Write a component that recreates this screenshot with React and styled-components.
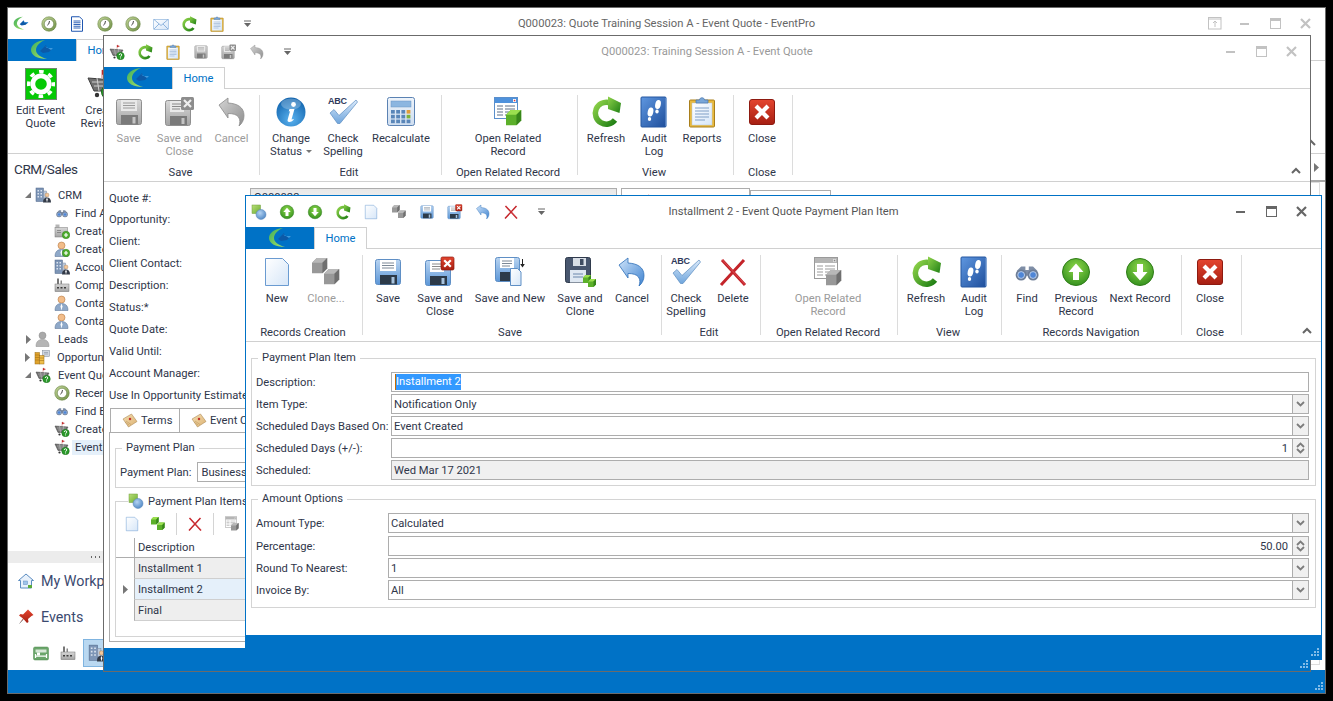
import React from 'react';
import styled, { createGlobalStyle } from 'styled-components';

const FONT = `Roboto, "Liberation Sans", sans-serif`;
const BLUE = '#0072c6';
const INK = '#2f364a';

const Global = createGlobalStyle`
  html, body { margin: 0; padding: 0; background: #000; }
  * { box-sizing: border-box; }
  body { font-family: ${FONT}; font-size: 11.2px; color: ${INK}; }
  fieldset { margin: 0; min-width: 0; }
`;

const Desktop = styled.div`position: relative; width: 1333px; height: 701px; background: #000; overflow: hidden;`;
const Win = styled.section`
  position: absolute; left: ${p => p.$x}px; top: ${p => p.$y}px; width: ${p => p.$w}px; height: ${p => p.$h}px;
  background: #fff; border: 1px solid ${p => p.$edge}; display: flex; flex-direction: column; overflow: hidden;
`;
const TitleBar = styled.header`display: grid; grid-template-columns: 1fr auto 1fr; align-items: center; height: 31px; flex: none;`;
const Qat = styled.div`display: flex; align-items: center; gap: 12px; padding-left: 5px;`;
const QatMore = styled.div`width: 16px; margin-left: 2px; display: flex; justify-content: center;`;
const Title = styled.div`color: ${p => p.$c}; white-space: nowrap;`;
const WinBtns = styled.div`display: flex; justify-content: flex-end; padding-right: ${p => p.$pr}px;`;
const WinBtn = styled.div`width: 30px; height: 20px; display: flex; align-items: center; justify-content: center;`;

const TabRow = styled.div`display: flex; height: 22px; flex: none; border-bottom: 1px solid #d0d0d0;`;
const LogoBlock = styled.div`width: 68px; height: 22px; background: ${BLUE}; display: flex; align-items: center; justify-content: center;`;
const HomeTab = styled.div`
  width: 53px; height: 22px; color: ${BLUE}; background: #fff; border: 1px solid #d0d0d0; border-bottom: 0;
  display: flex; align-items: center; justify-content: center;
`;

const Ribbon = styled.div`display: flex; height: 93px; flex: none; padding-top: 6px; border-bottom: 1px solid #d0d0d0; padding-right: 9px;`;
const RGroup = styled.div`
  width: ${p => p.$w}px; height: 80px; border-right: 1px solid #dcdcdc; display: flex; flex-direction: column; flex: none;
  padding-right: ${p => p.$pr || 0}px;
`;
const RButtons = styled.div`flex: 1; display: flex; justify-content: center; padding-top: 1px;`;
const RBtn = styled.div`
  width: ${p => p.$w}px; flex: none; display: flex; flex-direction: column; align-items: center;
  color: ${p => p.$off ? '#9b9b9b' : INK};
`;
const RIcon = styled.div`width: 32px; height: 32px; margin-bottom: 4px; display: flex; align-items: center; justify-content: center;`;
const RText = styled.div`text-align: center; line-height: 13px; white-space: nowrap;`;
const RLabel = styled.div`text-align: center; line-height: 14px; margin-bottom: -5px; white-space: nowrap;`;
const Caret = styled.span`display: inline-block; margin-left: 4px; border: 3px solid transparent; border-top: 3px solid #777; border-bottom: 0; vertical-align: 2px;`;
const Collapse = styled.div`margin-left: auto; align-self: flex-end; display: flex; margin-bottom: 7px;`;

const StatusBar = styled.footer`height: ${p => p.$h}px; flex: none; background: ${BLUE}; display: flex; justify-content: flex-end; align-items: flex-end; padding: 0 ${p => p.$gr}px 3px 0;`;

/* Form */
const FrontBody = styled.div`flex: 1; padding: 9px 5px 0; display: flex; flex-direction: column; gap: 6px;`;
const Box = styled.fieldset`border: 1px solid #d4d4d4; padding: 0 6px ${p => p.$pb}px 4px;`;
const Legend = styled.legend`margin-left: 2px; padding: 0 4px; line-height: 14px;`;
const Rows = styled.div`display: flex; flex-direction: column; gap: 2px; padding-top: 7px;`;
const Row = styled.div`display: grid; grid-template-columns: ${p => p.$lab}px 1fr; align-items: center; margin-top: ${p => p.$mt || 0}px;`;
const Lab = styled.label`white-space: nowrap;`;
const Field = styled.div`
  height: 20px; border: 1px solid #adadad; background: ${p => p.$ro ? '#f0f0f0' : '#fff'}; display: flex; align-items: center;
  padding-left: ${p => p.$pl ?? 2}px; color: ${INK}; overflow: hidden; white-space: nowrap;
`;
const FieldText = styled.span`flex: 1; text-align: ${p => p.$right ? 'right' : 'left'}; padding-right: ${p => p.$right ? 4 : 0}px;`;
const Sel = styled.span`background: #3399ff; color: #fff; border-left: 1px solid #c96a00; display: inline-block; line-height: 16px;`;
const Drop = styled.div`width: 16px; height: 100%; flex: none; background: #f0f0f0; border-left: 1px solid #adadad; display: flex; flex-direction: column; align-items: center; justify-content: center;`;

/* Mid form */
const MidBody = styled.div`flex: 1; padding: 4px 4px 6px 5px; display: flex; flex-direction: column; min-height: 0;`;
const MidRow = styled.div`display: grid; grid-template-columns: 141px 367px 4px 129px 81px; height: 22px; align-items: center;`;
const MidField = styled.div`height: 20px; border: 1px solid #adadad; background: linear-gradient(#e8e8e8,#f4f4f4); padding-left: 3px; line-height: 18px;`;
const MidBtn = styled.div`height: 20px; margin-top: ${p => p.$mt || 0}px; border: 1px solid #adadad; background: #fff; display: flex; align-items: center; padding: 5px 0 0 ${p => p.$pl}px;`;
const Swatch = styled.i`display: block; width: 10px; height: 10px; background: #bdbdbd; border: 1px solid #999;`;
const Tabs = styled.div`display: flex; margin-top: 2px; height: 24px; flex: none; padding-left: 1px;`;
const Tab = styled.div`
  width: ${p => p.$w}px; border: 1px solid #adadad; border-bottom: 0; border-left-width: ${p => p.$first ? 1 : 0}px;
  display: flex; align-items: center; gap: 3px; padding-left: 11px; white-space: nowrap;
  & > svg { flex: none; }
`;
const TabPanel = styled.div`flex: 1; border: 1px solid #adadad; padding: 8px 5px 5px; display: flex; flex-direction: column; gap: 5px; min-height: 0;`;
const InlineRow = styled.div`display: flex; align-items: center; gap: 4px; padding: 7px 0 5px 0;`;
const Box2 = styled.fieldset`border: 1px solid #d4d4d4; padding: 0 0 ${p => p.$pb}px 4px;`;
const PlanField = styled(Field)`width: 90px; height: 20px; margin-left: 2px;`;
const Legend2 = styled.legend`margin-left: 8px; padding: 0 4px 0 0; display: flex; align-items: center; gap: 4px; height: 16px;`;
const MiniBar = styled.div`display: flex; align-items: center; height: 24px; margin: 3px 0 2px 4px; gap: 10px;`;
const MiniSep = styled.div`width: 1px; height: 22px; background: #d4d4d4;`;
const GridT = styled.div`display: flex; flex-direction: column; margin-left: -4px;`;
const GridRow = styled.div`display: flex; height: ${p => p.$h}px;`;
const GridInd = styled.div`width: 18px; flex: none; display: flex; align-items: center; justify-content: center; border-bottom: ${p => p.$head ? '1px solid #adadad' : '0'};`;
const GridCell = styled.div`
  flex: 1; border-left: 1px solid #adadad; padding-left: 3px; display: flex; align-items: center;
  background: ${p => p.$bg}; border-bottom: 1px solid ${p => p.$head ? '#adadad' : '#cfcfcf'};
`;

/* Outer */
const OuterBody = styled.div`flex: 1; display: flex; min-height: 0;`;
const Sidebar = styled.aside`width: 95px; flex: none; display: flex; flex-direction: column; overflow: hidden;`;
const SideHead = styled.div`height: 32px; flex: none; padding: 5px 0 0 6px; font-size: 13.5px; letter-spacing: -.4px; line-height: 20px; white-space: nowrap;`;
const Tree = styled.div`flex: 1;`;
const TreeRow = styled.div`display: flex; align-items: center; height: 18px; padding-left: ${p => p.$lvl ? 46 : 17}px; white-space: nowrap;`;
const TreeArrow = styled.div`width: 6px; margin-right: 4px; display: flex; justify-content: center;`;
const TreeIcon = styled.div`width: 16px; height: 16px; flex: none; margin-right: ${p => p.$lvl ? 2 : 7}px;`;
const TreeLabel = styled.span`padding: 1px 4px 1px ${p => p.$lvl ? 3 : 0}px; background: ${p => p.$sel ? '#e5f0fa' : 'transparent'};`;
const Splitter = styled.div`height: 12px; flex: none; background: #ececec; display: flex; justify-content: flex-start; padding-left: 83px; align-items: center; gap: 2px;`;
const Dot = styled.i`width: 1px; height: 2px; margin-right: 1px; background: #666;`;
const NavItem = styled.div`height: 36px; flex: none; display: flex; align-items: center; padding-left: 10px; gap: 7px; font-size: 14.3px; color: #3b4a70; white-space: nowrap;`;
const NavStrip = styled.div`height: 35px; flex: none; display: flex; align-items: center; padding: 0 0 0 25px; gap: 11px;`;
const StripSel = styled.div`width: 40px; height: 28px; flex: none; margin-left: -4px; background: #b9d8f1; border: 1px solid #7fb4e0; padding: 4px 0 0 4px;`;
const Main = styled.main`flex: 1; display: flex; flex-direction: column; padding-bottom: 5px;`;
const MainHead = styled.div`height: 28px; flex: none; border-bottom: 2px solid #a8a8a8; display: flex; align-items: center; justify-content: flex-end; padding-right: 6px;`;
const MainFrame = styled.div`flex: 1; margin-right: 5px; border: 1px solid #dddddd;`;

const Defs = styled.svg`position: absolute; width: 0; height: 0;`;

/* ---------- icons ---------- */
const Ic = ({ s = 32, vb = 32, children }) => <svg width={s} height={s} viewBox={`0 0 ${vb} ${vb}`} style={{ display: 'block', flex: 'none' }}>{children}</svg>;

const Floppy = ({ s, gray }) => <Ic s={s}>
  <rect x="3.5" y="3.5" width="25" height="25" rx="2" fill={gray ? 'url(#gGray)' : 'url(#gSky)'} stroke={gray ? '#8f8f8f' : '#5f8fc5'} />
  <rect x="8" y="4" width="16" height="11" fill={gray ? '#e9e9e9' : '#fff'} />
  <path d="M10 7h12M10 9.5h12M10 12h12" stroke={gray ? '#9a9a9a' : '#7c8896'} strokeWidth="1" />
  <rect x="8" y="19" width="17" height="9.5" fill={gray ? '#7a7a7a' : '#2c3a49'} />
  <rect x="19.5" y="21" width="3" height="6.5" fill={gray ? '#c4c4c4' : '#a8c3de'} />
</Ic>;
const Badge = ({ x = 17, y = 1, w = 13 }) => <g transform={`translate(${x} ${y})`}>
  <rect width={w} height={w} rx="1.5" fill="url(#gRed)" stroke="#8e1a10" strokeWidth=".7" />
  <path d={`M3.2 3.2L${w - 3.2} ${w - 3.2}M${w - 3.2} 3.2L3.2 ${w - 3.2}`} stroke="#fff" strokeWidth="2.2" />
</g>;
const SaveCloseI = ({ s, gray }) => <Ic s={s}>
  <rect x="1.5" y="4.5" width="25" height="25" rx="2" fill={gray ? 'url(#gGray)' : 'url(#gSky)'} stroke={gray ? '#8f8f8f' : '#5f8fc5'} />
  <rect x="6" y="5" width="14" height="11" fill={gray ? '#e9e9e9' : '#fff'} />
  <path d="M8 8h10M8 10.5h10M8 13h8" stroke="#8a8a8a" />
  <rect x="6" y="20" width="17" height="9" fill={gray ? '#7a7a7a' : '#2c3a49'} />
  <rect x="17.5" y="22" width="3" height="6" fill={gray ? '#c4c4c4' : '#a8c3de'} />
  {gray ? <g><rect x="17" y="1" width="13" height="13" rx="1.5" fill="#8d8d8d" /><path d="M20 4l7 7M27 4l-7 7" stroke="#eee" strokeWidth="2.2" /></g> : <Badge />}
</Ic>;
const SaveNewI = ({ s }) => <Ic s={s}>
  <rect x="1.5" y="1.5" width="24" height="24" rx="2" fill="url(#gSky)" stroke="#5f8fc5" />
  <rect x="6" y="2" width="14" height="10" fill="#fff" />
  <path d="M8 5h10M8 7.5h10M8 10h8" stroke="#7c8896" />
  <rect x="6" y="16" width="13" height="9" fill="#2c3a49" />
  <path d="M16.5 12.5h7l3.5 3.5v13.5h-10.500z" fill="url(#gPage)" stroke="#5f8fc5" />
  <path d="M28.500 3v6" stroke="#222" /><path d="M26.200 8h4.600l-2.300 3.500z" fill="#222" />
</Ic>;
const SaveCloneI = ({ s }) => <Ic s={s}>
  <rect x="1.500" y="1.500" width="25" height="25" rx="2" fill="#48566e" stroke="#2f3a4c" />
  <rect x="9" y="2" width="13" height="8" fill="#d8dee6" /><rect x="16" y="3" width="3.500" height="6" fill="#3f4c61" />
  <rect x="6" y="14" width="16" height="12.500" fill="#dfe8f2" /><path d="M9 18h10M9 21h10" stroke="#6a87ab" />
  <Cube x={19} y={19} c="g" /><Cube x={24} y={23} c="g" />
</Ic>;
const Cube = ({ x, y, c }) => {
  const a = c === 'g' ? ['#9be04f', '#5cb02a', '#37861a'] : ['#b8b8b8', '#989898', '#6f6f6f'];
  return <g transform={`translate(${x} ${y})`}>
    <path d="M0 2.500L2.500 0h5.500v5.500L5.500 8H0z" fill={a[1]} /><path d="M0 2.500L2.500 0h5.500L5.500 2.500z" fill={a[0]} /><path d="M5.500 2.500L8 0v5.500L5.500 8z" fill={a[2]} />
  </g>;
};
const CubesI = ({ s, green }) => <Ic s={s}>
  <g transform="translate(2 2) scale(1.900)"><Cube x={0} y={0} c={green ? 'g' : 'x'} /></g>
  <g transform="translate(14 13) scale(1.900)"><Cube x={0} y={0} c={green ? 'g' : 'x'} /></g>
</Ic>;
const UndoI = ({ s, gray }) => <Ic s={s}>
  <path d="M3 9L12 2v5c9 .5 16 4 16 12.500 0 4.500-2 8-5 10.500 1-3 1.500-6-.5-9-2-2.500-5.500-3.500-10.500-3.500V22z" fill={gray ? 'url(#gGrayA)' : 'url(#gBlueA)'} stroke={gray ? '#8a8a8a' : '#2d6fb7'} strokeWidth=".8" />
</Ic>;
const InfoI = ({ s }) => <Ic s={s}>
  <circle cx="16" cy="16" r="14.500" fill="url(#gInfo)" />
  <ellipse cx="16" cy="8" rx="10" ry="5.500" fill="#fff" opacity=".25" />
  <circle cx="18.500" cy="8.500" r="2.400" fill="#fff" />
  <path d="M14.500 13h5l-3 10.500 2.500-.5c-1 2-2.800 3-4.700 3-1.600 0-2-1-1.600-2.400l2.300-8.400-1.300.3z" fill="#fff" />
</Ic>;
const AbcText = styled.text`font: bold 9px "Liberation Sans", sans-serif; fill: #2f3a5c; letter-spacing: -.2px;`;
const AbcI = ({ s }) => <Ic s={s}>
  <AbcText x="1" y="8">ABC</AbcText>
  <path d="M3 17l4-3.500 5 6L29 4l1.500 2L13 27.500h-2.500z" fill="url(#gCheck)" stroke="#5b8cc0" strokeWidth=".7" />
</Ic>;
const CalcI = ({ s }) => <Ic s={s}>
  <rect x="2.500" y="1.500" width="27" height="28" rx="2" fill="url(#gCalc)" stroke="#5b82b3" />
  <rect x="6" y="5" width="20" height="6" fill="#8cb6e0" stroke="#6a94c2" strokeWidth=".5" />
  {[0, 1, 2].map(r => [0, 1, 2, 3].map(c => <rect key={r + '' + c} x={6 + c * 5.200} y={14 + r * 4.800} width="3.800" height="3.600" fill={c === 3 ? ['#e09c3a', '#7fb13a', '#5a86b8'][r] : '#5a86b8'} />))}
</Ic>;
const RelatedI = ({ s, gray }) => <Ic s={s}>
  <rect x="2.500" y="1.500" width="23" height="21" fill="#fff" stroke={gray ? '#9a9a9a' : '#5a8fcc'} />
  <rect x="3" y="2" width="22" height="5" fill={gray ? '#b5b5b5' : '#4f92dc'} /><rect x="21" y="3" width="3" height="3" fill={gray ? '#e0e0e0' : '#fff'} /><rect x="21.800" y="3.800" width="1.500" height="1.500" fill={gray ? '#888' : '#d33'} />
  <path d="M5 10h6M13 10h10M5 13h6M13 13h10M5 16h6M13 16h10M5 19h6M13 19h4" stroke={gray ? '#9a9a9a' : '#5c6f86'} />
  <g transform="translate(14 14) scale(1.900)"><Cube x={0} y={0} c={gray ? 'x' : 'g'} /></g>
</Ic>;
const RefreshI = ({ s }) => <Ic s={s}>
  <path d="M25 24A11 11 0 1 1 19 6.500" fill="none" stroke="url(#gGreenS)" strokeWidth="5.500" />
  <path d="M18 .5L31 7 29.500 17 18 13z" fill="url(#gGreenS)" />
</Ic>;
const AuditI = ({ s }) => <Ic s={s}>
  <rect x="3" y="1" width="25" height="30" rx="1" fill="url(#gBook)" stroke="#2457a0" /><path d="M28 2v28" stroke="#7ea6dc" />
  <ellipse cx="12.500" cy="16" rx="2.800" ry="4.500" fill="#fff" transform="rotate(12 12.500 16)" /><ellipse cx="11.500" cy="23" rx="1.700" ry="2" fill="#fff" />
  <ellipse cx="20" cy="8.500" rx="2.800" ry="4.500" fill="#fff" transform="rotate(12 20 8.500)" /><ellipse cx="19" cy="15.500" rx="1.700" ry="2" fill="#fff" />
</Ic>;
const ClipI = ({ s }) => <Ic s={s}>
  <rect x="3.500" y="4" width="25" height="27" rx="1" fill="#e8b93d" stroke="#a97f1c" />
  <rect x="6" y="7" width="20" height="22" fill="url(#gPage)" stroke="#b7c7d8" strokeWidth=".5" />
  <path d="M9 12h14M9 15h14M9 18h14M9 21h14M9 24h10" stroke="#7e9fc6" />
  <path d="M10 7V4h3.500c0-3 5-3 5 0H22v3z" fill="#79a6d8" stroke="#4f7cb3" strokeWidth=".8" />
</Ic>;
const CloseI = ({ s }) => <Ic s={s}>
  <rect x="3.500" y="3.500" width="25" height="25" rx="2.500" fill="url(#gRed)" stroke="#8e1a10" />
  <path d="M10 10l12 12M22 10L10 22" stroke="#fff" strokeWidth="4.200" />
</Ic>;
const PageI = ({ s }) => <Ic s={s}>
  <path d="M4.500 2.500h17l6 6v21h-23z" fill="url(#gPage)" stroke="#6a9bd1" />
</Ic>;
const DelI = ({ s }) => <Ic s={s}>
  <path d="M5 4l23 25M27 4L4 29" stroke="#c4242a" strokeWidth="3" />
  <path d="M5 3.500l23 25" stroke="#e6646a" strokeWidth=".6" />
</Ic>;
const BinoI = ({ s }) => <Ic s={s}>
  <g transform="translate(2.500 2) scale(.85)">
    <path d="M4 15l5-5h5v4h4v-4h5l5 5v6H4z" fill="#7f8ea6" />
    <circle cx="9" cy="20" r="6.500" fill="#6d7d96" /><circle cx="23" cy="20" r="6.500" fill="#6d7d96" />
    <circle cx="9" cy="20" r="4" fill="#4f86d6" stroke="#c9d8ee" /><circle cx="23" cy="20" r="4" fill="#4f86d6" stroke="#c9d8ee" />
  </g>
</Ic>;
const ArrowBall = ({ s, down }) => <Ic s={s}>
  <circle cx="16" cy="16" r="13.500" fill="url(#gBall)" stroke="#2f7d18" />
  <path d={down ? 'M13 8h6v8h4.500L16 24.500 8.500 16H13z' : 'M13 24h6v-8h4.500L16 7.500 8.500 16H13z'} fill="#fff" />
</Ic>;
const GearI = ({ s }) => <Ic s={s}>
  <rect x=".5" y=".5" width="31" height="31" fill="#05c905" stroke="#6e8a6e" />
  <circle cx="16" cy="16" r="12.300" fill="none" stroke="#fff" strokeWidth="3.500" strokeDasharray="4.600 5.060" strokeDashoffset="2.300" />
  <circle cx="16" cy="16" r="8.200" fill="#05c905" stroke="#fff" strokeWidth="4.800" />
</Ic>;
const CartI = ({ s }) => <Ic s={s}>
  <path d="M2 10l6 13h14l6-11z" fill="#6f6f6f" stroke="#3e3e3e" />
  <path d="M6 14h18M8 18h14M11 10l2 13M19 10l-1 13" stroke="#cfcfcf" />
  <circle cx="11" cy="27" r="2.200" fill="#333" />
  <path d="M16 10V2l5 2.500-5 2" fill="#c33" stroke="#a11" strokeWidth=".6" />
  <circle cx="23" cy="24" r="7.500" fill="#2c9a2c" stroke="#1b6b1b" />
  <path d="M20.500 22c0-3.500 5-3.500 5 0 0 2-2.500 2-2.500 3.500" fill="none" stroke="#fff" strokeWidth="1.800" /><rect x="22" y="27" width="2" height="1.800" fill="#fff" />
</Ic>;
const ClockI = ({ s }) => <Ic s={s}>
  <circle cx="16" cy="16" r="14.500" fill="url(#gOlive)" stroke="#5d7a37" />
  <circle cx="16" cy="16" r="9.500" fill="#fff" stroke="#4d6a2a" />
  <path d="M17 10l-1.500 6-3 2.500" fill="none" stroke="#333" strokeWidth="1.800" />
</Ic>;
const DocI = ({ s }) => <Ic s={s}>
  <path d="M5 1.500h16l6 6V30.500H5z" fill="#fff" stroke="#1f56b0" strokeWidth="2" />
  <path d="M9 10h14M9 13.500h14M9 17h14M9 20.500h14M9 24h14" stroke="#1f56b0" strokeWidth="1.800" />
</Ic>;
const MailI = ({ s }) => <Ic s={s}>
  <rect x="1.500" y="6.500" width="29" height="20" fill="url(#gPage)" stroke="#6a9bd1" />
  <path d="M2 7l14 12L30 7M2 26l10-10M30 26L20 16" fill="none" stroke="#6a9bd1" strokeWidth="1.400" />
</Ic>;
const LogoI = ({ w = 24, h = 22 }) => <svg width={w} height={h} viewBox="0 0 24 22" style={{ display: 'block', flex: 'none' }}>
  <path d="M15 1C6 2 1 6 1 11c0 5 6 9 16 9-7-2-11-5-11-9 0-4 4-8 9-10z" fill="url(#gLogo)" />
  <path d="M10 12l6-6 1 3 6 0-4 4-6 1z" fill="#0c5aa8" /><path d="M15 7l2 2h6l-2 2z" fill="#3c9be0" />
</svg>;
const ShapesI = ({ s }) => <Ic s={s}>
  <rect x="2" y="2" width="17" height="17" fill="url(#gGreenB)" stroke="#6f9d3a" />
  <circle cx="20" cy="21" r="10" fill="url(#gGlobe)" stroke="#5a86b8" />
</Ic>;
const BuildPersonI = ({ s }) => <Ic s={s}>
  <rect x="2" y="2" width="15" height="27" fill="#7d95b6" stroke="#4e6588" />
  <rect x="17" y="8" width="6" height="14" fill="#b9c7da" stroke="#7d8da5" />
  <path d="M5 6h3v3H5zM11 6h3v3h-3zM5 12h3v3H5zM11 12h3v3h-3zM5 18h3v3H5zM11 18h3v3h-3z" fill="#dbe4ef" />
  <circle cx="24" cy="16" r="4" fill="#f3c79a" stroke="#8a6033" strokeWidth=".6" /><path d="M16 31c0-7 3-10 8-10s8 3 8 10z" fill="#323a47" /><path d="M24 21l-1.500 4 1.500 6 1.500-6z" fill="#fff" />
</Ic>;
const PersonI = ({ s, add, grayp }) => <Ic s={s}>
  <circle cx="15" cy="9" r="7" fill={grayp ? '#a9a9a9' : '#f2bd8a'} stroke={grayp ? '#8a8a8a' : '#a8682e'} />
  <path d="M2 31c0-10 5-14 13-14s13 4 13 14z" fill={grayp ? '#b5b5b5' : '#8fa9c9'} stroke={grayp ? '#8a8a8a' : '#516b8e'} />
  {!grayp && <path d="M15 17l-2 6 2 8 2-8z" fill="#fff" />}
  {add && <g><circle cx="24" cy="24" r="7.500" fill="#4fae2e" stroke="#2f7d18" /><path d="M24 20v8M20 24h8" stroke="#fff" strokeWidth="2.400" /></g>}
</Ic>;
const FactoryI = ({ s }) => <Ic s={s}>
  <rect x="2" y="14" width="28" height="15" fill="url(#gGray)" stroke="#6f6f6f" />
  <rect x="6" y="3" width="4" height="11" fill="#777" /><rect x="13" y="7" width="3" height="7" fill="#888" />
  <rect x="6" y="20" width="4" height="3" fill="#3d3d3d" /><rect x="13" y="20" width="4" height="3" fill="#3d3d3d" /><rect x="20" y="20" width="4" height="3" fill="#3d3d3d" />
</Ic>;
const FolderAddI = ({ s }) => <Ic s={s}>
  <rect x="3" y="3" width="8" height="8" fill="#b5b5b5" /><rect x="2" y="9" width="25" height="19" fill="url(#gGray)" stroke="#7a7a7a" />
  <path d="M6 15h8M6 19h8" stroke="#555" />
  <circle cx="24" cy="24" r="7.500" fill="#4fae2e" stroke="#2f7d18" /><path d="M24 20v8M20 24h8" stroke="#fff" strokeWidth="2.400" />
</Ic>;
const CoinsI = ({ s }) => <Ic s={s}>
  <rect x="17" y="3" width="14" height="12" fill="#cfd6e0" stroke="#7b8696" /><path d="M20 7h8M20 10h8" stroke="#7b8696" />
  <rect x="2" y="7" width="9" height="23" fill="#e0a32c" stroke="#9a6b10" /><rect x="11" y="13" width="9" height="17" fill="#efbe4a" stroke="#9a6b10" />
  <path d="M2 12h9M2 17h9M2 22h9M11 18h9M11 23h9" stroke="#9a6b10" />
</Ic>;
const NoteI = ({ s }) => <Ic s={s}>
  <path d="M2 12L19 2l11 15-17 11z" fill="url(#gTan)" stroke="#a17b43" /><circle cx="16" cy="12" r="2.500" fill="#c4352e" />
  <path d="M8 16l10 7M6 18l8 6" stroke="#b48f55" />
</Ic>;
const BedI = ({ s }) => <Ic s={s}>
  <rect x="1" y="4" width="30" height="26" rx="3" fill="#6aa56a" stroke="#4c8a4c" />
  <rect x="5" y="9" width="22" height="6" fill="#d8e8d8" /><path d="M5 22h22M5 18v8M27 18v8" stroke="#fff" strokeWidth="2.500" /><rect x="8" y="15" width="6" height="6" fill="#fff" />
</Ic>;
const HouseI = ({ s }) => <Ic s={s}>
  <path d="M16 2L1 15h4v15h22V15h4z" fill="#e8f1fb" stroke="#5b8cc0" strokeWidth="2" />
  <rect x="11" y="16" width="8" height="7" fill="#9fc3ea" stroke="#5b8cc0" /><rect x="20" y="24" width="8" height="6" fill="#5aaa3a" />
</Ic>;
const PinI = ({ s }) => <Ic s={s}>
  <path d="M20 1l11 11-4 2-7 6 1 6-3 2-7-8-8 8 7-9-8-6 3-3 5 1 7-7z" fill="url(#gRed)" />
  <path d="M11 21l-8 8" stroke="#888" strokeWidth="1.600" />
</Ic>;

const Chev = ({ up }) => <svg width="9" height="6" viewBox="0 0 9 6"><path d={up ? 'M1 5l3.500-3.500L8 5' : 'M1 1l3.500 3.500L8 1'} fill="none" stroke="#7c7c7c" strokeWidth="1.800" /></svg>;
const Grip = () => <svg width="8" height="8" viewBox="0 0 8 8" style={{ display: 'block' }}>
  {[[6, 0], [3, 3], [6, 3], [0, 6], [3, 6], [6, 6]].map(([x, y]) => <rect key={x + '-' + y} x={x} y={y} width="2" height="2" fill="#82bce8" />)}
</svg>;
const QatArrow = () => <svg width="7" height="7" viewBox="0 0 7 7"><path d="M0 1h7" stroke="#666" /><path d="M0 3h7L3.500 7z" fill="#666" /></svg>;
const RightTri = ({ c = '#777' }) => <svg width="5" height="9" viewBox="0 0 5 9"><path d="M0 0l5 4.500L0 9z" fill={c} /></svg>;
const DownTri = () => <svg width="6" height="6" viewBox="0 0 6 6"><path d="M6 0v6H0z" fill="#777" /></svg>;
const UpChev = () => <svg width="10" height="7" viewBox="0 0 10 7"><path d="M1 6l4-4 4 4" fill="none" stroke="#666" strokeWidth="2" /></svg>;
const Min = ({ c }) => <svg width="10" height="4" viewBox="0 0 10 4"><rect y="1" width="9" height="2" fill={c} /></svg>;
const Max = ({ c }) => <svg width="11" height="11" viewBox="0 0 11 11"><rect x=".5" y=".5" width="10" height="10" fill="none" stroke={c} /><rect width="11" height="3" fill={c} /></svg>;
const Cross = ({ c }) => <svg width="11" height="11" viewBox="0 0 11 11"><path d="M1 1l9 9M10 1l-9 9" stroke={c} strokeWidth="2.200" /></svg>;
const Restore = ({ c }) => <svg width="14" height="13" viewBox="0 0 14 13"><rect x=".5" y=".5" width="12.500" height="11.500" fill="none" stroke={c} /><path d="M1 2h12" stroke={c} /><path d="M7 10V4M5 6l2-2 2 2" stroke={c} fill="none" /></svg>;

const WindowButtons = ({ c, pr, restore }) => <WinBtns $pr={pr}>
  {restore && <WinBtn><Restore c={c} /></WinBtn>}
  <WinBtn><Min c={c} /></WinBtn><WinBtn><Max c={c} /></WinBtn><WinBtn><Cross c={c} /></WinBtn>
</WinBtns>;

const Tabbar = () => <TabRow><LogoBlock><LogoI /></LogoBlock><HomeTab>Home</HomeTab></TabRow>;

const RibbonView = ({ groups, collapse }) => <Ribbon>
  {groups.map(g => <RGroup key={g.label + g.w} $w={g.w} $pr={g.pr}>
    <RButtons>
      {g.items.map(b => <RBtn key={b.t.join()} $w={b.w} $off={b.off}>
        <RIcon>{b.i}</RIcon>
        <RText>{b.t.map((l, n) => <div key={l}>{l}{b.caret && n === b.t.length - 1 && <Caret />}</div>)}</RText>
      </RBtn>)}
    </RButtons>
    <RLabel>{g.label}</RLabel>
  </RGroup>)}
  {collapse && <Collapse><UpChev /></Collapse>}
</Ribbon>;

const frontGroups = [
  { label: 'Records Creation', w: 117, pr: 2, items: [
    { w: 46, t: ['New'], i: <PageI s={32} /> },
    { w: 52, t: ['Clone...'], off: 1, i: <CubesI s={32} /> }] },
  { label: 'Save', w: 299, pr: 4, items: [
    { w: 44, t: ['Save'], i: <Floppy s={32} /> },
    { w: 60, t: ['Save and', 'Close'], i: <SaveCloseI s={32} /> },
    { w: 80, t: ['Save and New'], i: <SaveNewI s={32} /> },
    { w: 60, t: ['Save and', 'Clone'], i: <SaveCloneI s={32} /> },
    { w: 44, t: ['Cancel'], i: <UndoI s={32} /> }] },
  { label: 'Edit', w: 99, pr: 4, items: [
    { w: 48, t: ['Check', 'Spelling'], i: <AbcI s={32} /> },
    { w: 46, t: ['Delete'], i: <DelI s={32} /> }] },
  { label: 'Open Related Record', w: 137, pr: 2, items: [
    { w: 120, t: ['Open Related', 'Record'], off: 1, i: <RelatedI s={32} gray /> }] },
  { label: 'View', w: 104, pr: 3, items: [
    { w: 52, t: ['Refresh'], i: <RefreshI s={32} /> },
    { w: 44, t: ['Audit', 'Log'], i: <AuditI s={32} /> }] },
  { label: 'Records Navigation', w: 180, pr: 1, items: [
    { w: 44, t: ['Find'], i: <BinoI s={32} /> },
    { w: 54, t: ['Previous', 'Record'], i: <ArrowBall s={32} /> },
    { w: 74, t: ['Next Record'], i: <ArrowBall s={32} down /> }] },
  { label: 'Close', w: 60, pr: 3, items: [{ w: 50, t: ['Close'], i: <CloseI s={32} /> }] },
];
const midGroups = [
  { label: 'Save', w: 156, pr: 2, items: [
    { w: 48, t: ['Save'], off: 1, i: <Floppy s={32} gray /> },
    { w: 54, t: ['Save and', 'Close'], off: 1, i: <SaveCloseI s={32} gray /> },
    { w: 50, t: ['Cancel'], off: 1, i: <UndoI s={32} gray /> }] },
  { label: 'Edit', w: 182, pr: 3, items: [
    { w: 56, t: ['Change', 'Status'], caret: 1, i: <InfoI s={32} /> },
    { w: 48, t: ['Check', 'Spelling'], i: <AbcI s={32} /> },
    { w: 68, t: ['Recalculate'], i: <CalcI s={32} /> }] },
  { label: 'Open Related Record', w: 136, pr: 3, items: [
    { w: 120, t: ['Open Related', 'Record'], i: <RelatedI s={32} /> }] },
  { label: 'View', w: 156, pr: 3, items: [
    { w: 52, t: ['Refresh'], i: <RefreshI s={32} /> },
    { w: 44, t: ['Audit', 'Log'], i: <AuditI s={32} /> },
    { w: 52, t: ['Reports'], i: <ClipI s={32} /> }] },
  { label: 'Close', w: 59, pr: 2, items: [{ w: 50, t: ['Close'], i: <CloseI s={32} /> }] },
];
const outerGroups = [
  { label: '', w: 300, pr: 178, items: [
    { w: 66, t: ['Edit Event', 'Quote'], i: <GearI s={32} /> },
    { w: 56, t: ['Create', 'Revision'], i: <CartI s={32} /> }] },
];

const tree = [
  { t: 'CRM', i: BuildPersonI, a: 'down' },
  { t: 'Find Accounts', i: BinoI, l: 1 },
  { t: 'Create Account', i: FolderAddI, l: 1 },
  { t: 'Create Contact', i: p => <PersonI {...p} add />, l: 1 },
  { t: 'Accounts', i: BuildPersonI, l: 1 },
  { t: 'Companies', i: FactoryI, l: 1 },
  { t: 'Contacts', i: PersonI, l: 1 },
  { t: 'Contact List', i: PersonI, l: 1 },
  { t: 'Leads', i: p => <PersonI {...p} grayp />, a: 'right' },
  { t: 'Opportunities', i: CoinsI, a: 'right' },
  { t: 'Event Quotes', i: CartI, a: 'down' },
  { t: 'Recent Items', i: ClockI, l: 1 },
  { t: 'Find Event Quote', i: BinoI, l: 1 },
  { t: 'Create Event Quote', i: CartI, l: 1 },
  { t: 'Event Quotes', i: CartI, l: 1, sel: 1 },
];

const midLabels = ['Opportunity:', 'Client:', 'Client Contact:', 'Description:', 'Status:*', 'Quote Date:', 'Valid Until:', 'Account Manager:', 'Use In Opportunity Estimate'];

const Select = ({ v }) => <><FieldText>{v}</FieldText><Drop><Chev /></Drop></>;
const Spin = ({ v }) => <><FieldText $right>{v}</FieldText><Drop><Chev up /><Chev /></Drop></>;

export default function App() {
  return <Desktop>
    <Global />
    <Defs>
      <defs>
        <linearGradient id="gSky" x1="0" y1="0" x2="0" y2="1"><stop offset="0" stopColor="#b9d4f1" /><stop offset="1" stopColor="#5c97d8" /></linearGradient>
        <linearGradient id="gGray" x1="0" y1="0" x2="0" y2="1"><stop offset="0" stopColor="#d8d8d8" /><stop offset="1" stopColor="#a4a4a4" /></linearGradient>
        <linearGradient id="gGrayA" x1="0" y1="0" x2="1" y2="1"><stop offset="0" stopColor="#d4d4d4" /><stop offset="1" stopColor="#8f8f8f" /></linearGradient>
        <linearGradient id="gBlueA" x1="0" y1="0" x2="1" y2="1"><stop offset="0" stopColor="#cfe4fa" /><stop offset="1" stopColor="#3f83d0" /></linearGradient>
        <linearGradient id="gRed" x1="0" y1="0" x2="0" y2="1"><stop offset="0" stopColor="#e4452f" /><stop offset="1" stopColor="#a61f12" /></linearGradient>
        <linearGradient id="gPage" x1="0" y1="0" x2="1" y2="1"><stop offset="0" stopColor="#ffffff" /><stop offset="1" stopColor="#d6e6f8" /></linearGradient>
        <radialGradient id="gInfo" cx=".5" cy=".75" r=".75"><stop offset="0" stopColor="#5ab2ef" /><stop offset="1" stopColor="#0f62ac" /></radialGradient>
        <linearGradient id="gCheck" x1="0" y1="0" x2="0" y2="1"><stop offset="0" stopColor="#dcebfb" /><stop offset="1" stopColor="#6fa5dc" /></linearGradient>
        <linearGradient id="gCalc" x1="0" y1="0" x2="0" y2="1"><stop offset="0" stopColor="#eef4fb" /><stop offset="1" stopColor="#cfdef0" /></linearGradient>
        <linearGradient id="gGreenS" x1="0" y1="0" x2="1" y2="1"><stop offset="0" stopColor="#8fd34a" /><stop offset="1" stopColor="#1f7f14" /></linearGradient>
        <linearGradient id="gBook" x1="0" y1="0" x2="1" y2="1"><stop offset="0" stopColor="#5f97e0" /><stop offset="1" stopColor="#1f4f9c" /></linearGradient>
        <radialGradient id="gBall" cx=".5" cy=".35" r=".7"><stop offset="0" stopColor="#8fd84a" /><stop offset="1" stopColor="#2f8d1c" /></radialGradient>
        <linearGradient id="gOlive" x1="0" y1="0" x2="1" y2="1"><stop offset="0" stopColor="#c5d79c" /><stop offset="1" stopColor="#6f8f45" /></linearGradient>
        <linearGradient id="gLogo" x1="0" y1="0" x2="1" y2="1"><stop offset="0" stopColor="#3fae5a" /><stop offset="1" stopColor="#a6e36a" /></linearGradient>
        <linearGradient id="gGreenB" x1="0" y1="0" x2="1" y2="1"><stop offset="0" stopColor="#b8e07a" /><stop offset="1" stopColor="#6cab2f" /></linearGradient>
        <radialGradient id="gGlobe" cx=".4" cy=".35" r=".7"><stop offset="0" stopColor="#b4d3f2" /><stop offset="1" stopColor="#4d86c4" /></radialGradient>
        <linearGradient id="gTan" x1="0" y1="0" x2="1" y2="1"><stop offset="0" stopColor="#f4dcaf" /><stop offset="1" stopColor="#dcb374" /></linearGradient>
      </defs>
    </Defs>

    {/* Outer application window */}
    <Win $x={7} $y={7} $w={1319} $h={687} $edge="#6b6b6b">
      <TitleBar>
        <Qat>
          <LogoI w={16} h={15} /><ClockI s={16} /><DocI s={16} /><ClockI s={16} /><ClockI s={16} /><MailI s={16} /><RefreshI s={16} /><ClipI s={16} />
          <QatMore><QatArrow /></QatMore>
        </Qat>
        <Title $c="#666">Q000023: Quote Training Session A - Event Quote - EventPro</Title>
        <WindowButtons c="#c2c2c2" pr={5} restore />
      </TitleBar>
      <Tabbar />
      <RibbonView groups={outerGroups} collapse />
      <OuterBody>
        <Sidebar>
          <SideHead>CRM/Sales</SideHead>
          <Tree>
            {tree.map(r => {
              const I = r.i;
              return <TreeRow key={r.t + (r.l || 0)} $lvl={r.l}>
                {!r.l && <TreeArrow>{r.a === 'down' ? <DownTri /> : <RightTri />}</TreeArrow>}
                <TreeIcon $lvl={r.l}><I s={16} /></TreeIcon>
                <TreeLabel $lvl={r.l} $sel={r.sel}>{r.t}</TreeLabel>
              </TreeRow>;
            })}
          </Tree>
          <Splitter><Dot /><Dot /><Dot /></Splitter>
          <NavItem><HouseI s={16} /> My Workplace</NavItem>
          <NavItem><PinI s={16} /> Events</NavItem>
          <NavStrip>
            <BedI s={16} /><FactoryI s={16} /><StripSel><BuildPersonI s={18} /></StripSel>
          </NavStrip>
        </Sidebar>
        <Main>
          <MainHead><RightTri /></MainHead>
          <MainFrame />
        </Main>
      </OuterBody>
      <StatusBar $h={23} $gr={2}><Grip /></StatusBar>
    </Win>

    {/* Event Quote window */}
    <Win $x={103} $y={35} $w={1208} $h={637} $edge="#6b6b6b">
      <TitleBar>
        <Qat>
          <CartI s={16} /><RefreshI s={16} /><ClipI s={16} /><Floppy s={16} gray /><SaveCloseI s={16} gray /><UndoI s={16} gray />
          <QatMore><QatArrow /></QatMore>
        </Qat>
        <Title $c="#999">Q000023: Training Session A - Event Quote</Title>
        <WindowButtons c="#c2c2c2" pr={4} />
      </TitleBar>
      <Tabbar />
      <RibbonView groups={midGroups} collapse />
      <MidBody>
        <MidRow>
          <Lab>Quote #:</Lab><MidField>Q000023</MidField><span /><MidBtn $pl={18}><PinI s={14} /></MidBtn><MidBtn $mt={4} $pl={12}><Swatch /></MidBtn>
        </MidRow>
        {midLabels.map(l => <MidRow key={l}><Lab>{l}</Lab></MidRow>)}
        <Tabs>
          <Tab $first $w={70}><NoteI s={16} /> Terms</Tab>
          <Tab $w={110}><NoteI s={16} /> Event Contacts</Tab>
        </Tabs>
        <TabPanel>
          <Box2 $pb={0}>
            <Legend>Payment Plan</Legend>
            <InlineRow><Lab>Payment Plan:</Lab><PlanField $pl={3}>Business Plan</PlanField></InlineRow>
          </Box2>
          <Box2 $pb={15}>
            <Legend2><ShapesI s={16} /> Payment Plan Items</Legend2>
            <MiniBar>
              <PageI s={16} /><CubesI s={16} green /><MiniSep /><DelI s={16} /><MiniSep /><RelatedI s={16} gray /><MiniSep />
            </MiniBar>
            <GridT>
              <GridRow $h={20}><GridInd $head /><GridCell $head>Description</GridCell></GridRow>
              <GridRow $h={21}><GridInd /><GridCell $bg="#eeeeee">Installment 1</GridCell></GridRow>
              <GridRow $h={21}><GridInd><RightTri c="#777" /></GridInd><GridCell $bg="#e5f0fa">Installment 2</GridCell></GridRow>
              <GridRow $h={21}><GridInd /><GridCell $bg="#eeeeee">Final</GridCell></GridRow>
            </GridT>
          </Box2>
        </TabPanel>
      </MidBody>
      <StatusBar $h={23} $gr={2}><Grip /></StatusBar>
    </Win>

    {/* Payment plan item window */}
    <Win $x={245} $y={195} $w={1077} $h={465} $edge={BLUE}>
      <TitleBar>
        <Qat>
          <ShapesI s={16} /><ArrowBall s={16} /><ArrowBall s={16} down /><RefreshI s={16} /><PageI s={16} /><CubesI s={16} /><Floppy s={16} /><SaveCloseI s={16} /><UndoI s={16} /><DelI s={16} />
          <QatMore><QatArrow /></QatMore>
        </Qat>
        <Title $c="#555">Installment 2 - Event Quote Payment Plan Item</Title>
        <WindowButtons c="#666" pr={5} />
      </TitleBar>
      <Tabbar />
      <RibbonView groups={frontGroups} collapse />
      <FrontBody>
        <Box $pb={5}>
          <Legend>Payment Plan Item</Legend>
          <Rows>
            <Row $lab={135}><Lab>Description:</Lab><Field $pl={3}><Sel>Installment 2</Sel></Field></Row>
            <Row $lab={135}><Lab>Item Type:</Lab><Field><Select v="Notification Only" /></Field></Row>
            <Row $lab={135}><Lab>Scheduled Days Based On:</Lab><Field><Select v="Event Created" /></Field></Row>
            <Row $lab={135}><Lab>Scheduled Days (+/-):</Lab><Field><Spin v="1" /></Field></Row>
            <Row $lab={135}><Lab>Scheduled:</Lab><Field $ro>Wed Mar 17 2021</Field></Row>
          </Rows>
        </Box>
        <Box $pb={7}>
          <Legend>Amount Options</Legend>
          <Rows>
            <Row $lab={132}><Lab>Amount Type:</Lab><Field><Select v="Calculated" /></Field></Row>
            <Row $lab={132} $mt={1}><Lab>Percentage:</Lab><Field><Spin v="50.00" /></Field></Row>
            <Row $lab={132}><Lab>Round To Nearest:</Lab><Field><Select v="1" /></Field></Row>
            <Row $lab={132}><Lab>Invoice By:</Lab><Field><Select v="All" /></Field></Row>
          </Rows>
        </Box>
      </FrontBody>
      <StatusBar $h={24} $gr={2}><Grip /></StatusBar>
    </Win>
  </Desktop>;
}
